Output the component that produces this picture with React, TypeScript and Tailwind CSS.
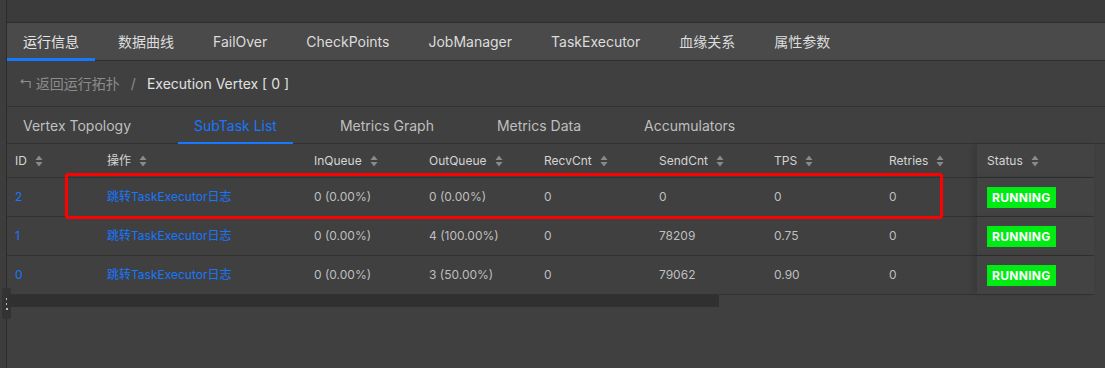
import React from "react";

const topTabs = ["运行信息", "数据曲线", "FailOver", "CheckPoints", "JobManager", "TaskExecutor", "血缘关系", "属性参数"];
const subTabs = ["Vertex Topology", "SubTask List", "Metrics Graph", "Metrics Data", "Accumulators"];

const rows = [
  { id: "2", inq: "0 (0.00%)", outq: "0 (0.00%)", recv: "0", send: "0", tps: "0", retries: "0" },
  { id: "1", inq: "0 (0.00%)", outq: "4 (100.00%)", recv: "0", send: "78209", tps: "0.75", retries: "0" },
  { id: "0", inq: "0 (0.00%)", outq: "3 (50.00%)", recv: "0", send: "79062", tps: "0.90", retries: "0" },
];

function Sorter() {
  return (
    <svg width="8" height="12" viewBox="0 0 8 12" className="ml-2 shrink-0">
      <path d="M4 0.5 L7.5 5 H0.5 Z" fill="#8a8a8a" />
      <path d="M4 11.5 L7.5 7 H0.5 Z" fill="#8a8a8a" />
    </svg>
  );
}

const cols = [
  { key: "id", title: "ID", w: "w-[92px]" },
  { key: "op", title: "操作", w: "w-[207px]" },
  { key: "inq", title: "InQueue", w: "w-[115px]" },
  { key: "outq", title: "OutQueue", w: "w-[115px]" },
  { key: "recv", title: "RecvCnt", w: "w-[115px]" },
  { key: "send", title: "SendCnt", w: "w-[115px]" },
  { key: "tps", title: "TPS", w: "w-[115px]" },
  { key: "retries", title: "Retries", w: "w-[96px]" },
];

export default function App() {
  return (
    <div
      className="w-[1105px] h-[368px] bg-[#404040] flex overflow-hidden relative"
      style={{ fontFamily: 'Inter, "Noto Sans CJK SC", sans-serif' }}
    >
      <div className="w-[7px] shrink-0 bg-[#3d3d3d] border-r border-[#2c2c2c] h-full" />
      <div className="absolute left-[2px] top-[288px] w-[9px] h-[31px] bg-[#333333] rounded-[2px] flex flex-col items-center justify-center gap-[3px]">
        <div className="w-[2px] h-[2px] bg-[#bbbbbb]" />
        <div className="w-[2px] h-[2px] bg-[#bbbbbb]" />
        <div className="w-[2px] h-[2px] bg-[#bbbbbb]" />
      </div>
      <div className="flex-1 flex flex-col">
        <div className="h-[23px] bg-[#3b3b3b] border-b border-[#2e2e2e]" />
        <div className="h-[38px] bg-[#4a4a4a] border-b border-[#2e2e2e] flex gap-[7px] items-stretch">
          {topTabs.map((t, i) => (
            <div
              key={t}
              className={`px-4 flex items-center text-[14px] relative ${i === 0 ? "text-[#e6e6e6]" : "text-[#dcdcdc]"}`}
            >
              {t}
              {i === 0 && <div className="absolute left-0 right-0 bottom-[-1px] h-[3px] bg-[#1677ff]" />}
            </div>
          ))}
        </div>
        <div className="h-[46px] border-b border-[#333333] flex items-center pl-[12px] text-[14px]">
          <span className="text-[#8c8c8c] mr-[4px] text-[13px]">↰</span>
          <span className="text-[#8c8c8c]">返回运行拓扑</span>
          <span className="text-[#8c8c8c] mx-[11px]">/</span>
          <span className="text-[#e0e0e0]">Execution Vertex [ 0 ]</span>
        </div>
        <div className="h-[37px] border-b border-[#333333] flex gap-[31px] items-stretch">
          {subTabs.map((t, i) => (
            <div
              key={t}
              className={`px-4 flex items-center text-[14px] relative ${i === 1 ? "text-[#1677ff]" : "text-[#bfbfbf]"}`}
            >
              {t}
              {i === 1 && <div className="absolute left-0 right-0 bottom-[-1px] h-[2px] bg-[#1677ff]" />}
            </div>
          ))}
        </div>
        <div className="w-[1087px] relative">
          <div className="flex h-[34px] border-b border-[#333333] text-[12px] text-[#d4d4d4]">
            {cols.map((c) => (
              <div key={c.key} className={`${c.w} shrink-0 flex items-center px-[8px]`}>
                {c.title}
                <Sorter />
              </div>
            ))}
            <div className="flex-1 flex items-center px-[10px] bg-[#434343] shadow-[-4px_0_6px_rgba(0,0,0,0.12)]">
              Status
              <Sorter />
            </div>
          </div>
          {rows.map((r) => (
            <div key={r.id} className="flex h-[39px] border-b border-[#333333] text-[12px] text-[#bfbfbf]">
              <div className="w-[92px] shrink-0 flex items-center px-[8px] text-[#1677ff]">{r.id}</div>
              <div className="w-[207px] shrink-0 flex items-center px-[8px] text-[#1677ff]">跳转TaskExecutor日志</div>
              <div className="w-[115px] shrink-0 flex items-center px-[8px]">{r.inq}</div>
              <div className="w-[115px] shrink-0 flex items-center px-[8px]">{r.outq}</div>
              <div className="w-[115px] shrink-0 flex items-center px-[8px]">{r.recv}</div>
              <div className="w-[115px] shrink-0 flex items-center px-[8px]">{r.send}</div>
              <div className="w-[115px] shrink-0 flex items-center px-[8px]">{r.tps}</div>
              <div className="w-[96px] shrink-0 flex items-center px-[8px]">{r.retries}</div>
              <div className="flex-1 flex items-center px-[10px] bg-[#434343] shadow-[-4px_0_6px_rgba(0,0,0,0.12)]">
                <span className="bg-[#00ea14] text-white font-bold text-[12px] px-[5px] h-[21px] leading-[21px] tracking-[0.3px]">
                  RUNNING
                </span>
              </div>
            </div>
          ))}
          <div className="h-[12px] w-[712px] bg-[#303030]" />
          <div className="absolute left-[58px] top-[29px] w-[878px] h-[46px] border-[3px] border-[#ff0000] rounded-[3px] pointer-events-none" />
        </div>
      </div>
    </div>
  );
}
